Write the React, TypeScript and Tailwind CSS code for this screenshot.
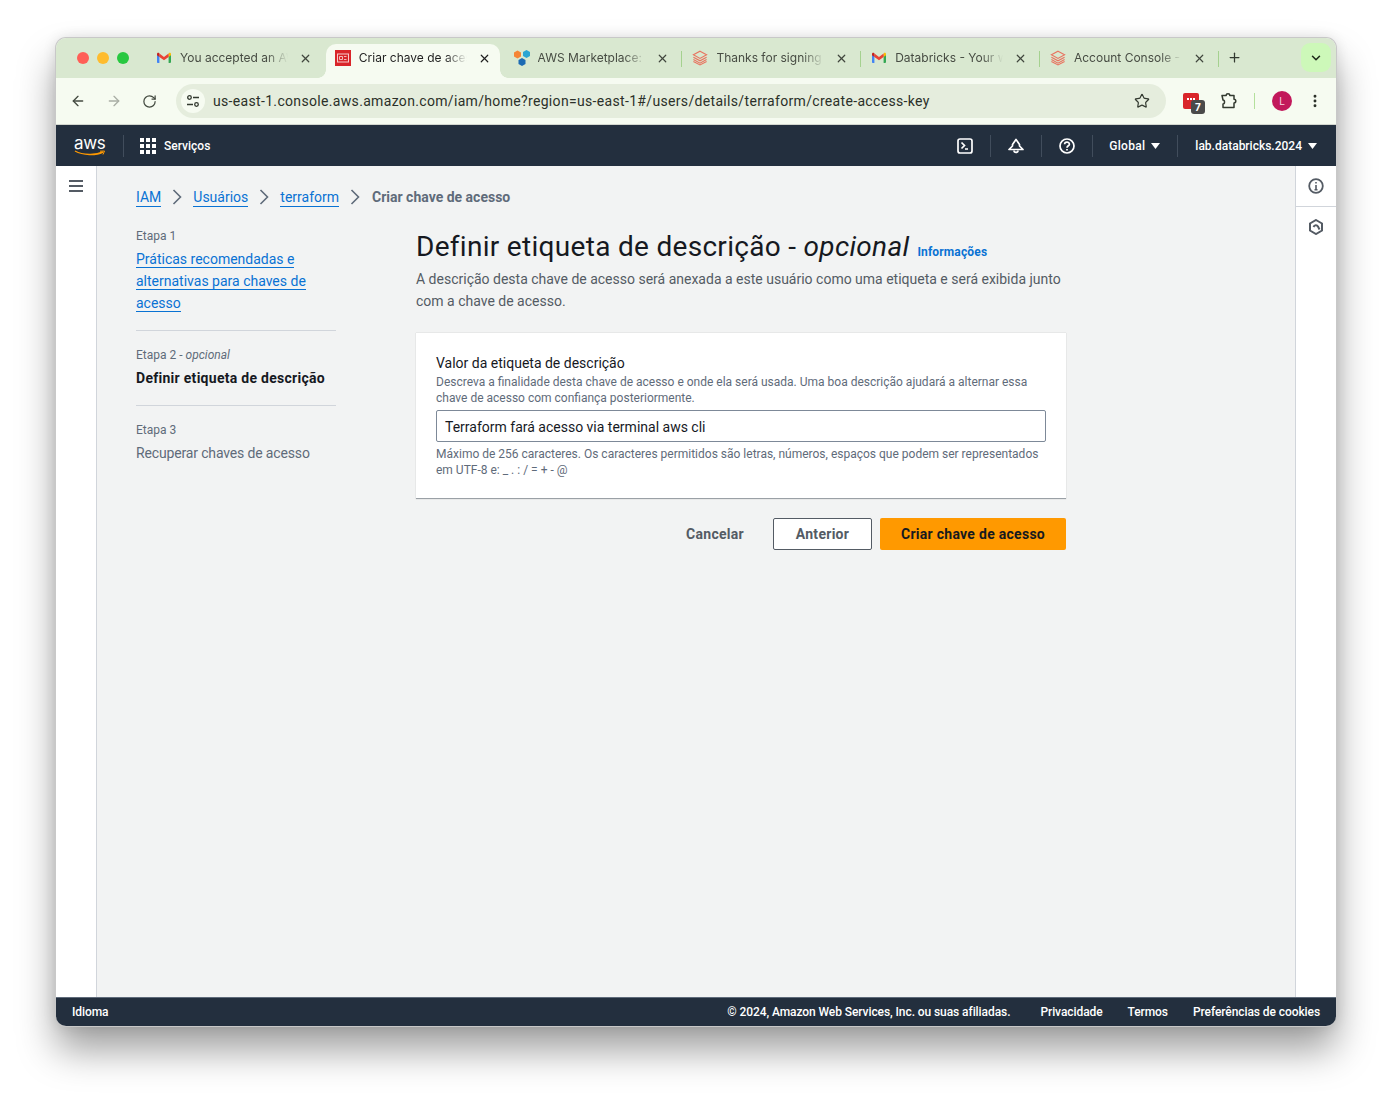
import React from "react";
import { ArrowLeft, ArrowRight, RotateCw, Star, X, Plus, ChevronDown, MoreVertical } from "lucide-react";

const Gmail = () => (
  <svg width="16" height="16" viewBox="0 0 16 16" className="shrink-0">
    <path d="M1 13V4.2L3.4 5.6V13H1.9C1.4 13 1 12.6 1 13Z" fill="#4285f4" />
    <path d="M12.6 13V5.6L15 4.2V12.1C15 12.6 14.6 13 14.1 13H12.6Z" fill="#34a853" />
    <path d="M12.6 3.9V6.9L15 5.2V4C15 2.9 13.8 2.3 12.9 3L12.6 3.9Z" fill="#fbbc04" />
    <path d="M3.4 6.9V3.6L8 7.1L12.6 3.6V6.9L8 10.3Z" fill="#ea4335" />
    <path d="M1 4V5.2L3.4 6.9V3.6L3.1 3C2.2 2.3 1 2.9 1 4Z" fill="#c5221f" />
  </svg>
);

const DB = () => (
  <svg width="16" height="16" viewBox="0 0 16 16" className="shrink-0" fill="none" stroke="#e8735f" strokeWidth="1.1">
    <path d="M8 1.2L14.6 4.8L8 8.4L1.4 4.8Z" />
    <path d="M1.4 7.2L8 10.8L14.6 7.2" />
    <path d="M1.4 9.6L8 13.2L14.6 9.6" />
    <path d="M1.4 11.6L8 15L14.6 11.6" />
  </svg>
);

const Market = () => (
  <svg width="18" height="18" viewBox="0 0 18 18" className="shrink-0">
    <path d="M1 3.5L4.5 1.5L8 3.5V7.5L4.5 9.5L1 7.5Z" fill="#f58536" />
    <path d="M10 3L13.5 1L17 3V7L13.5 9L10 7Z" fill="#2aa5d3" />
    <path d="M5.5 11L9 9L12.5 11V15L9 17L5.5 15Z" fill="#1d6bb3" />
  </svg>
);

const Console = () => (
  <svg width="16" height="16" viewBox="0 0 16 16" className="shrink-0">
    <rect width="16" height="16" fill="#d9252a" />
    <rect x="2.5" y="4" width="11" height="8" fill="none" stroke="#f6c9ca" strokeWidth="1" />
    <path d="M4.5 6.5H7.5V9.5H4.5ZM9 6.5H11.5M9 9.5H11.5" fill="none" stroke="#f6c9ca" strokeWidth="0.9" />
  </svg>
);

function Tab({ icon, title, sep }: { icon: React.ReactNode; title: string; sep?: boolean }) {
  return (
    <div className="relative w-[178.8px] h-[34px] shrink-0 flex items-center pl-[9px] pb-[6px] text-[#474c43]">
      <div className="w-4 flex justify-center">{icon}</div>
      <div className="ml-2 w-[108px] overflow-hidden whitespace-nowrap text-[12px] leading-4 [mask-image:linear-gradient(to_right,black_80%,transparent)]">{title}</div>
      <X size={13} strokeWidth={2.2} className="absolute right-[14px] top-[8px] text-[#40463d]" />
      {sep && <div className="absolute right-[1px] top-[7px] w-px h-[16px] bg-[#a5d18f]" />}
    </div>
  );
}

function ActiveTab({ icon, title }: { icon: React.ReactNode; title: string }) {
  return (
    <div className="relative w-[174px] mr-[4.8px] h-[34px] shrink-0 flex items-center pl-[9px] pb-[6px] bg-[#f6fbf1] rounded-t-[10px] text-[#1f1f1f]">
      <div className="absolute left-[-8px] bottom-0 w-2 h-2 bg-[radial-gradient(circle_at_0_0,transparent_7.5px,#f6fbf1_8px)]" />
      <div className="absolute right-[-8px] bottom-0 w-2 h-2 bg-[radial-gradient(circle_at_100%_0,transparent_7.5px,#f6fbf1_8px)]" />
      <div className="w-4 flex justify-center">{icon}</div>
      <div className="ml-2 w-[108px] overflow-hidden whitespace-nowrap text-[12px] leading-4 [mask-image:linear-gradient(to_right,black_80%,transparent)]">{title}</div>
      <X size={13} strokeWidth={2.2} className="absolute right-[9px] top-[8px] text-[#1f1f1f]" />
    </div>
  );
}

const Sep = () => <div className="w-px h-[22px] bg-[#414d5c]" />;

const Crumb = ({ children }: { children: React.ReactNode }) => (
  <a className="text-[#0972d3] border-b border-[#0972d3] leading-[18px]">{children}</a>
);
const CrumbArrow = () => (
  <svg width="16" height="16" viewBox="0 0 16 16" fill="none" stroke="#5f6b7a" strokeWidth="1.6" className="mx-[8px]">
    <path d="M4.5 1L11.5 8L4.5 15" />
  </svg>
);

export default function App() {
  return (
    <div className="w-[1392px] h-[1100px] bg-white pt-[38px] pl-[56px] font-['Roboto','Noto_Sans',sans-serif]">
      <div className="w-[1280px] h-[988px] rounded-[10px] flex flex-col overflow-hidden shadow-[0_24px_38px_rgba(0,0,0,0.38),0_0_14px_rgba(0,0,0,0.12)] ring-1 ring-[#c8c8c8]">
        {/* tab strip */}
        <div className="h-[40px] bg-[#d9e8d0] flex items-end pl-[21px] relative shrink-0 font-['Inter',sans-serif]">
          <div className="flex gap-2 w-[70px] h-[36px] items-center pb-[5px] shrink-0">
            <span className="w-3 h-3 rounded-full bg-[#ff5f57]" />
            <span className="w-3 h-3 rounded-full bg-[#febc2e]" />
            <span className="w-3 h-3 rounded-full bg-[#28c840]" />
          </div>
          <Tab icon={<Gmail />} title="You accepted an AWS" />
          <ActiveTab icon={<Console />} title="Criar chave de acesso" />
          <Tab icon={<Market />} title="AWS Marketplace: Da" sep />
          <Tab icon={<DB />} title="Thanks for signing up" sep />
          <Tab icon={<Gmail />} title="Databricks - Your wor" sep />
          <Tab icon={<DB />} title="Account Console - Da" sep />
          <Plus size={15} strokeWidth={2} className="ml-[7px] mb-[13px] text-[#333a30]" />
          <div className="absolute right-[5px] top-[5px] w-[30px] h-[29px] rounded-[9px] bg-[#cdf8b9] flex items-center justify-center">
            <ChevronDown size={14} strokeWidth={2.6} className="text-[#1f2a1a]" />
          </div>
        </div>
        {/* toolbar */}
        <div className="h-[47px] bg-[#f6fbf1] flex items-center pl-[14px] pr-[12px] shrink-0 border-b border-[#d3d7cf]">
          <ArrowLeft size={16} strokeWidth={2} className="text-[#444b41]" />
          <ArrowRight size={16} strokeWidth={2} className="text-[#a9aea5] ml-[20px]" />
          <RotateCw size={15} strokeWidth={2} className="text-[#444b41] ml-[20px]" />
          <div className="ml-[19px] w-[990px] h-[34px] rounded-full bg-[#e5eddd] flex items-center pl-[5px] pr-[16px]">
            <div className="w-[24px] h-[24px] rounded-full bg-[#f6fbf1] flex items-center justify-center">
              <svg width="14" height="14" viewBox="0 0 14 14" fill="none" stroke="#333a30" strokeWidth="1.3">
                <circle cx="3.5" cy="3.5" r="1.8" />
                <path d="M7 3.5H13" />
                <circle cx="10.5" cy="10.5" r="1.8" />
                <path d="M1 10.5H7" />
              </svg>
            </div>
            <span className="ml-[8px] text-[14px] text-[#2b3029] tracking-[0.33px]">us-east-1.console.aws.amazon.com/iam/home?region=us-east-1#/users/details/terraform/create-access-key</span>
            <Star size={16} strokeWidth={1.8} className="ml-auto text-[#333a30]" />
          </div>
          <div className="relative ml-[17px] w-4 h-4">
            <div className="w-4 h-4 rounded-[2px] bg-[#d9252a] flex items-start justify-center pt-[5px] gap-px">
              <span className="w-[2px] h-[2px] bg-white" />
              <span className="w-[2px] h-[2px] bg-white" />
              <span className="w-[2px] h-[2px] bg-white" />
            </div>
            <div className="absolute left-[8px] top-[7px] w-[14px] h-[14px] rounded-[3px] bg-[#4a4a4a] text-white text-[10px] leading-[14px] text-center font-bold font-['Inter',sans-serif]">7</div>
          </div>
          <svg width="18" height="18" viewBox="0 0 18 18" fill="none" stroke="#333a30" strokeWidth="1.5" className="ml-[21px]">
            <path d="M2 3.5H6.2C6.2 1.2 9.8 1.2 9.8 3.5H14V7.2C16.4 7.2 16.4 11 14 11V15.5H3V12C5 12 5 8 3 8Z" strokeLinejoin="round" />
          </svg>
          <div className="w-px h-[16px] bg-[#b4e09c] ml-[16px]" />
          <div className="ml-[17px] w-5 h-5 rounded-full bg-[#c2185b] text-[#f7d6e2] text-[10px] leading-5 text-center font-['Inter',sans-serif]">L</div>
          <MoreVertical size={16} strokeWidth={2.4} className="ml-[15px] text-[#2b3029]" />
        </div>
        {/* aws nav */}
        <div className="h-[41px] bg-[#232f3e] flex items-center text-white shrink-0 text-[12px] font-medium">
          <div className="w-[67px] pl-[18px] flex flex-col items-start">
            <span className="text-[17px] leading-[15px] font-normal tracking-[-0.3px] font-['Inter',sans-serif]">aws</span>
            <svg width="32" height="6" viewBox="0 0 32 6" fill="none" className="-mt-px">
              <path d="M1 1C9 5.5 22 5.5 29 2" stroke="#ff9900" strokeWidth="1.4" />
              <path d="M26 1.2L30.5 1L29 4.5" stroke="#ff9900" strokeWidth="1" />
            </svg>
          </div>
          <Sep />
          <div className="ml-[16px] grid grid-cols-3 gap-[2px]">
            {Array.from({ length: 9 }).map((_, i) => (
              <span key={i} className="w-[4px] h-[4px] bg-white" />
            ))}
          </div>
          <span className="ml-[8px]">Serviços</span>
          <div className="ml-auto flex items-center">
            <svg width="16" height="16" viewBox="0 0 16 16" fill="none" stroke="white" strokeWidth="1.7">
              <rect x="1" y="1" width="14" height="14" rx="2" />
              <path d="M4.5 4.5L7.5 7.5L4.5 10.5M8 11H11" />
            </svg>
            <div className="mx-[17px]"><Sep /></div>
            <svg width="16" height="16" viewBox="0 0 16 16" fill="none" stroke="white" strokeWidth="1.7">
              <path d="M8 1.5L4.5 6.5V8L1 11.5H15L11.5 8V6.5Z" strokeLinejoin="round" />
              <path d="M6 12.5C6 15 10 15 10 12.5" />
            </svg>
            <div className="mx-[17px]"><Sep /></div>
            <svg width="16" height="16" viewBox="0 0 16 16" fill="none" stroke="white" strokeWidth="1.7">
              <circle cx="8" cy="8" r="7" />
              <path d="M5.6 6.2C5.6 3.4 10.4 3.4 10.4 6.2C10.4 7.8 8 7.8 8 9.8" />
              <path d="M8 11V12.6" />
            </svg>
            <div className="ml-[17px] mr-[16px]"><Sep /></div>
            <span className="tracking-[0.3px]">Global</span>
            <svg width="9" height="6" viewBox="0 0 9 6" fill="white" className="ml-[6px]"><path d="M0 0H9L4.5 6Z" /></svg>
            <div className="ml-[17px] mr-[17px]"><Sep /></div>
            <span>lab.databricks.2024</span>
            <svg width="9" height="6" viewBox="0 0 9 6" fill="white" className="ml-[6px] mr-[19px]"><path d="M0 0H9L4.5 6Z" /></svg>
          </div>
        </div>
        {/* body */}
        <div className="flex-1 flex bg-[#f2f3f3] min-h-0">
          <div className="w-[41px] bg-white border-r border-[#d1d5db] pt-[14px] pl-[13px] shrink-0">
            <div className="flex flex-col gap-[3px] w-[14px]">
              <span className="h-[2px] bg-[#545b64]" />
              <span className="h-[2px] bg-[#545b64]" />
              <span className="h-[2px] bg-[#545b64]" />
            </div>
          </div>
          <div className="flex-1 pl-[39px] pt-[22px] text-[14px]">
            <div className="flex items-center h-[18px] leading-[18px]">
              <Crumb>IAM</Crumb>
              <CrumbArrow />
              <Crumb>Usuários</Crumb>
              <CrumbArrow />
              <Crumb>terraform</Crumb>
              <CrumbArrow />
              <span className="ml-[1px] font-bold text-[#5f6b7a]">Criar chave de acesso</span>
            </div>
            <div className="flex mt-[14px]">
              <div className="w-[200px] shrink-0 pt-[8px]">
                <div className="text-[12px] leading-4 text-[#5f6b7a]">Etapa 1</div>
                <div className="mt-[4px] pb-[16px] border-b border-[#d1d5db] leading-[22px] text-[#0972d3]">
                  <span className="border-b border-[#0972d3]">Práticas recomendadas e</span><br />
                  <span className="border-b border-[#0972d3]">alternativas para chaves de</span><br />
                  <span className="border-b border-[#0972d3]">acesso</span>
                </div>
                <div className="mt-[16px] text-[12px] leading-4 text-[#5f6b7a]">Etapa 2 - <i>opcional</i></div>
                <div className="mt-[4px] pb-[16px] border-b border-[#d1d5db] leading-[22px] font-bold text-[#16191f] whitespace-nowrap tracking-[0.28px]">Definir etiqueta de descrição</div>
                <div className="mt-[16px] text-[12px] leading-4 text-[#5f6b7a]">Etapa 3</div>
                <div className="mt-[4px] leading-[22px] text-[#5f6b7a] tracking-[-0.15px]">Recuperar chaves de acesso</div>
              </div>
              <div className="ml-[80px] w-[650px] pt-[9px]">
                <div className="flex items-baseline h-[36px] leading-[36px]">
                  <h1 className="text-[28px] text-[#16191f] whitespace-nowrap tracking-[0.3px]">Definir etiqueta de descrição - <i>opcional</i></h1>
                  <span className="ml-2 text-[12px] font-bold text-[#0972d3] tracking-[0.15px]">Informações</span>
                </div>
                <p className="mt-[3px] leading-[22px] text-[#545b64]">A descrição desta chave de acesso será anexada a este usuário como uma etiqueta e será exibida junto com a chave de acesso.</p>
                <div className="mt-[21px] bg-white h-[166px] px-[20px] pt-[20px] border-b border-[#9aa0a6] shadow-[0_0_1px_rgba(0,0,0,0.25)]">
                  <div className="leading-[20px] text-[#16191f]">Valor da etiqueta de descrição</div>
                  <div className="mt-px text-[12px] leading-4 text-[#5f6b7a]">Descreva a finalidade desta chave de acesso e onde ela será usada. Uma boa descrição ajudará a alternar essa chave de acesso com confiança posteriormente.</div>
                  <div className="mt-[4px] h-[32px] border border-[#7d8998] rounded-[2px] px-[8px] leading-[32px] text-[#16191f]">Terraform fará acesso via terminal aws cli</div>
                  <div className="mt-[4px] text-[12px] leading-4 text-[#5f6b7a]">Máximo de 256 caracteres. Os caracteres permitidos são letras, números, espaços que podem ser representados em UTF-8 e: _ . : / = + - @</div>
                </div>
                <div className="mt-[19px] flex justify-end items-center font-bold tracking-[0.28px]">
                  <span className="text-[#545b64] mr-[29px]">Cancelar</span>
                  <div className="h-[32px] w-[99px] border border-[#545b64] rounded-[2px] bg-white text-[#545b64] flex items-center justify-center">Anterior</div>
                  <div className="ml-[8px] h-[32px] w-[186px] rounded-[2px] bg-[#ff9900] text-[#16191f] flex items-center justify-center">Criar chave de acesso</div>
                </div>
              </div>
            </div>
          </div>
          <div className="w-[41px] bg-white border-l border-[#d1d5db] shrink-0 flex flex-col items-center">
            <div className="h-[41px] w-full border-b border-[#d1d5db] flex items-center justify-center">
              <svg width="16" height="16" viewBox="0 0 16 16" fill="none" stroke="#545b64" strokeWidth="1.8">
                <circle cx="8" cy="8" r="6.8" />
                <path d="M8 7V12M6.5 11.8H9.5M8 4V5.6" strokeWidth="1.6" />
              </svg>
            </div>
            <div className="mt-[12px]">
              <svg width="16" height="16" viewBox="0 0 16 16" fill="none" stroke="#545b64" strokeWidth="2">
                <path d="M8 1L14 4.5V11.5L8 15L2 11.5V4.5Z" />
                <path d="M5.5 8C6.5 5.8 9 5.8 10 7.5L11.5 10.5" />
              </svg>
            </div>
          </div>
        </div>
        {/* footer */}
        <div className="h-[29px] bg-[#232f3e] border-t border-[#5f6b7a] shrink-0 flex items-center px-4 text-[12px] font-medium text-white tracking-[-0.08px]">
          <span>Idioma</span>
          <span className="ml-auto">© 2024, Amazon Web Services, Inc. ou suas afiliadas.</span>
          <span className="ml-[30px]">Privacidade</span>
          <span className="ml-[25px]">Termos</span>
          <span className="ml-[25px]">Preferências de cookies</span>
        </div>
      </div>
    </div>
  );
}
